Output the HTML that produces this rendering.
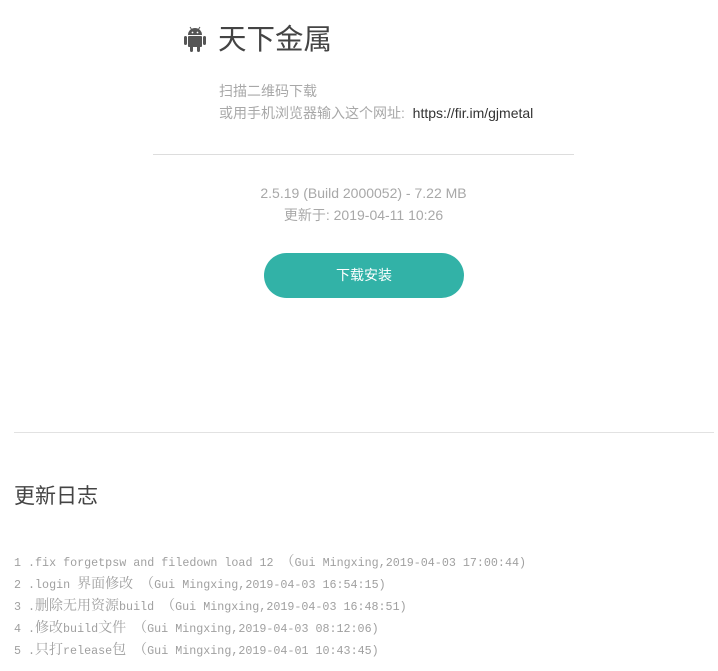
<!DOCTYPE html>
<html><head><meta charset="utf-8"><style>
body{margin:0;background:#fff;width:718px;height:671px;position:relative;overflow:hidden;font-family:"Liberation Sans","Noto Sans CJK SC",sans-serif}
.a{position:absolute;white-space:nowrap}
.g{color:#a8a8a8;font-size:14px}
.log{position:absolute;left:14px;top:552px;font-family:"Liberation Mono","Noto Serif CJK SC",monospace;font-size:11.7px;line-height:22px;color:#a0a0a0;white-space:pre}
.log b{font-weight:normal;font-size:14px;line-height:10px;font-family:"Noto Serif CJK SC",serif}
</style></head><body>
<svg class="a" style="left:184px;top:26px" width="22" height="26" viewBox="0 0 22 26">
<g fill="#555"><path d="M4 9a7 7 0 0 1 14 0z"/><rect x="4" y="10" width="14" height="11" rx="1"/><rect x="0" y="10" width="3" height="9" rx="1.5"/><rect x="19" y="10" width="3" height="9" rx="1.5"/><rect x="6" y="19" width="3" height="7" rx="1.5"/><rect x="13" y="19" width="3" height="7" rx="1.5"/></g>
<path d="M6 1l2 3M16 1l-2 3" stroke="#555" stroke-width="1"/><circle cx="8.5" cy="6.5" r="0.9" fill="#fff"/><circle cx="13.5" cy="6.5" r="0.9" fill="#fff"/>
</svg>
<div class="a" style="left:218px;top:22px;font-size:28.5px;color:#444;line-height:36px">天下金属</div>
<div class="a g" style="left:219px;top:82px;line-height:18px">扫描二维码下载</div>
<div class="a g" style="left:219px;top:104px;line-height:18px">或用手机浏览器输入这个网址:&nbsp; <span style="color:#333">https://fir.im/gjmetal</span></div>
<div class="a" style="left:153px;top:154px;width:421px;height:1px;background:#ddd"></div>
<div class="a" style="left:153px;top:182px;width:421px;text-align:center;color:#a8a8a8;font-size:14px;line-height:22px">2.5.19 (Build 2000052) - 7.22 MB<br>更新于: 2019-04-11 10:26</div>
<div class="a" style="left:264px;top:253px;width:200px;height:45px;border-radius:23px;background:#32b2a7;color:#fff;font-size:14px;line-height:45px;text-align:center">下载安装</div>
<div class="a" style="left:14px;top:432px;width:700px;height:1px;background:#e2e2e2"></div>
<div class="a" style="left:14px;top:483px;font-size:21px;color:#444;line-height:28px">更新日志</div>
<div class="log">1 .fix forgetpsw and filedown load 12 <b>（</b>Gui Mingxing,2019-04-03 17:00:44)
2 .login <b>界面修改</b> <b>（</b>Gui Mingxing,2019-04-03 16:54:15)
3 .<b>删除无用资源</b>build <b>（</b>Gui Mingxing,2019-04-03 16:48:51)
4 .<b>修改</b>build<b>文件</b> <b>（</b>Gui Mingxing,2019-04-03 08:12:06)
5 .<b>只打</b>release<b>包</b> <b>（</b>Gui Mingxing,2019-04-01 10:43:45)</div>
</body></html>
